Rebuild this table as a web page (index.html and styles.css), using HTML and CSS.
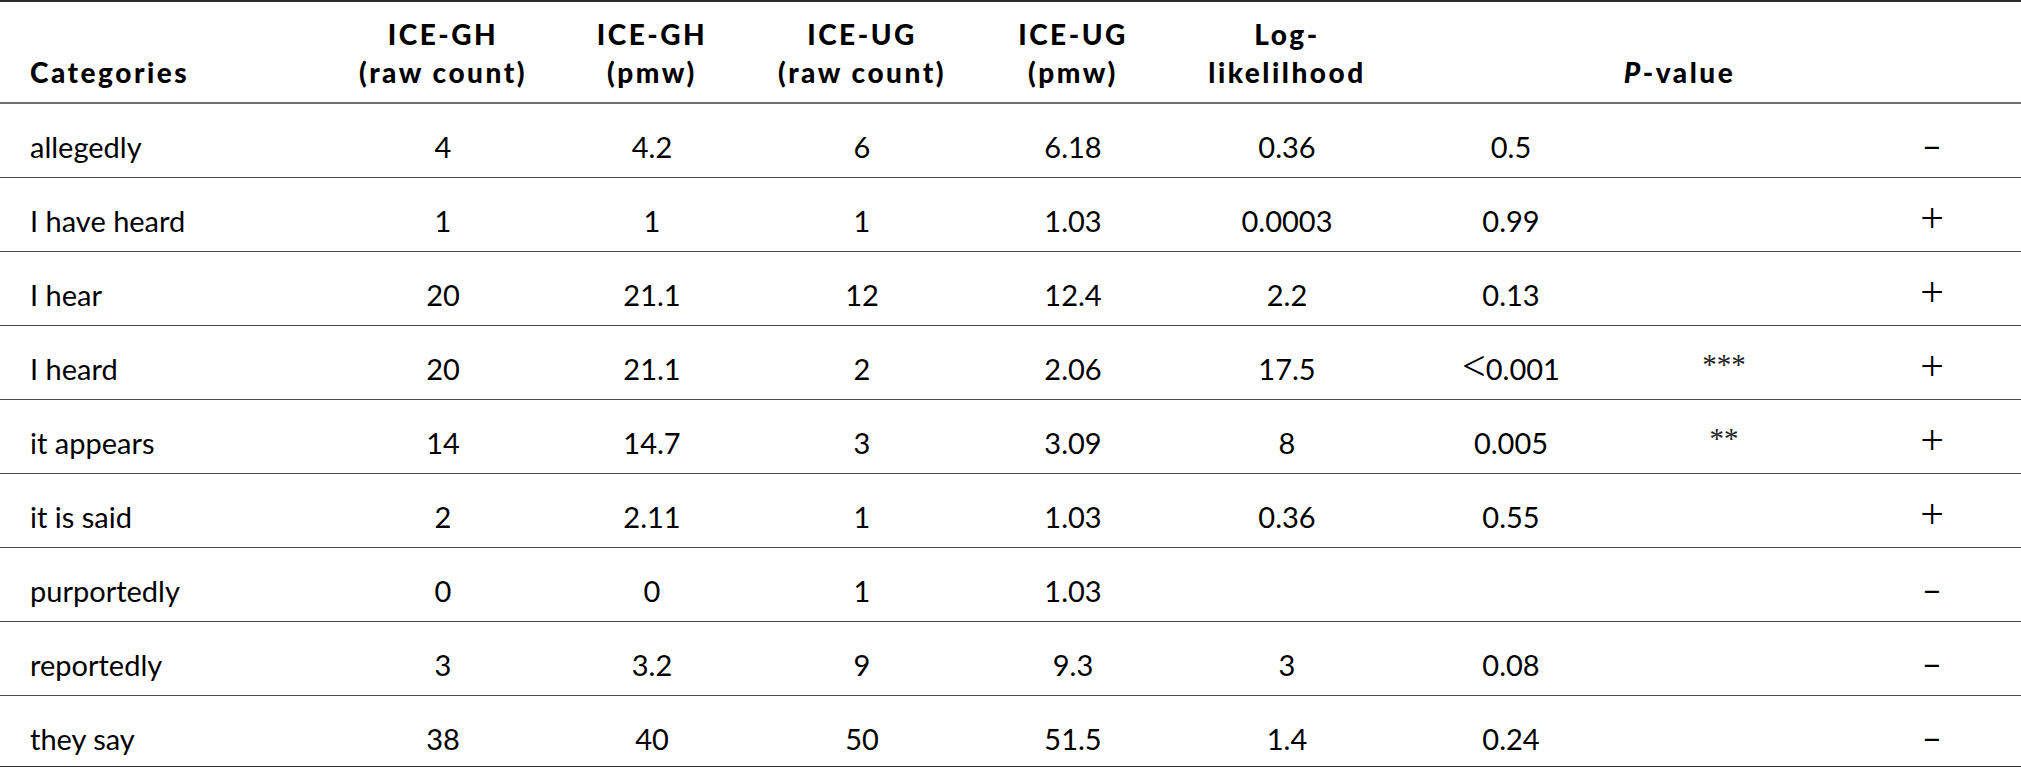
FILE: index.html
```html
<!DOCTYPE html>
<html lang="en">
<head>
<meta charset="utf-8">
<title>Reportative markers: ICE-GH vs ICE-UG</title>
<link rel="stylesheet" href="styles.css">
</head>
<body>
<table class="data">
  <colgroup>
    <col class="c-cat">
    <col class="c-n1">
    <col class="c-n2">
    <col class="c-n3">
    <col class="c-n4">
    <col class="c-ll">
    <col class="c-p">
    <col class="c-sig">
    <col class="c-dir">
  </colgroup>
  <thead>
    <tr>
      <th class="cat">Categories</th>
      <th>ICE-GH<br>(raw count)</th>
      <th>ICE-GH<br>(pmw)</th>
      <th>ICE-UG<br>(raw count)</th>
      <th>ICE-UG<br>(pmw)</th>
      <th>Log-<br>likelilhood</th>
      <th colspan="3" class="pv"><i>P</i>-value</th>
    </tr>
  </thead>
  <tbody>
    <tr><td class="cat">allegedly</td><td>4</td><td>4.2</td><td>6</td><td>6.18</td><td>0.36</td><td>0.5</td><td></td><td class="dir"><span class="minus">–</span></td></tr>
    <tr><td class="cat">I have heard</td><td>1</td><td>1</td><td>1</td><td>1.03</td><td>0.0003</td><td>0.99</td><td></td><td class="dir"><span class="plus">+</span></td></tr>
    <tr><td class="cat">I hear</td><td>20</td><td>21.1</td><td>12</td><td>12.4</td><td>2.2</td><td>0.13</td><td></td><td class="dir"><span class="plus">+</span></td></tr>
    <tr><td class="cat">I heard</td><td>20</td><td>21.1</td><td>2</td><td>2.06</td><td>17.5</td><td><span class="lt">&lt;</span>0.001</td><td><span class="stars">***</span></td><td class="dir"><span class="plus">+</span></td></tr>
    <tr><td class="cat">it appears</td><td>14</td><td>14.7</td><td>3</td><td>3.09</td><td>8</td><td>0.005</td><td><span class="stars">**</span></td><td class="dir"><span class="plus">+</span></td></tr>
    <tr><td class="cat">it is said</td><td>2</td><td>2.11</td><td>1</td><td>1.03</td><td>0.36</td><td>0.55</td><td></td><td class="dir"><span class="plus">+</span></td></tr>
    <tr><td class="cat">purportedly</td><td>0</td><td>0</td><td>1</td><td>1.03</td><td></td><td></td><td></td><td class="dir"><span class="minus">–</span></td></tr>
    <tr><td class="cat">reportedly</td><td>3</td><td>3.2</td><td>9</td><td>9.3</td><td>3</td><td>0.08</td><td></td><td class="dir"><span class="minus">–</span></td></tr>
    <tr class="last"><td class="cat">they say</td><td>38</td><td>40</td><td>50</td><td>51.5</td><td>1.4</td><td>0.24</td><td></td><td class="dir"><span class="minus">–</span></td></tr>
  </tbody>
</table>
</body>
</html>
```
FILE: styles.css
```css
html, body {
  margin: 0;
  padding: 0;
  background: #ffffff;
}

body {
  font-family: Lato, "Open Sans", "Liberation Sans", sans-serif;
  color: #000;
  overflow: hidden;
}

.data {
  width: 2021px;
  table-layout: fixed;
  border-collapse: separate;
  border-spacing: 0;
}

.c-cat { width: 338px; }
.c-n1 { width: 210px; }
.c-n2 { width: 208px; }
.c-n3 { width: 212px; }
.c-n4 { width: 210px; }
.c-ll { width: 218px; }
.c-p { width: 230px; }
.c-sig { width: 196px; }
.c-dir { width: 199px; }

.data th {
  font-weight: 900;
  font-size: 28px;
  letter-spacing: 0.09em;
  line-height: 38px;
  padding: 13px 0 11px;
  text-align: center;
  vertical-align: bottom;
  border-top: 2px solid #2e2e2e;
  border-bottom: 2px solid #6e6e6e;
  white-space: nowrap;
}

.data th.cat {
  text-align: left;
  padding-left: 30px;
}

.data th.pv {
  padding-right: 58px;
}

.data th.pv i {
  font-style: italic;
}

.data td {
  font-size: 29px;
  line-height: 30px;
  padding: 28px 0 15px;
  text-align: center;
  vertical-align: top;
  border-bottom: 1px solid #4a4a4a;
  white-space: nowrap;
}

.data td.cat {
  text-align: left;
  padding-left: 30px;
}

.data td.dir {
  padding-left: 21px;
}

.data tr.last td {
  padding-bottom: 12px;
  border-bottom: 2px solid #2e2e2e;
}

.plus,
.lt {
  font-family: "Liberation Serif", "Times New Roman", serif;
  font-size: 42px;
  line-height: 0;
  font-weight: 400;
}

.minus {
  font-family: Lato, "Open Sans", sans-serif;
  font-size: 35px;
  line-height: 0;
}

.stars {
  font-family: "Liberation Serif", "Times New Roman", serif;
  font-size: 29px;
  line-height: 0;
  vertical-align: 6px;
  color: #222;
}
```
